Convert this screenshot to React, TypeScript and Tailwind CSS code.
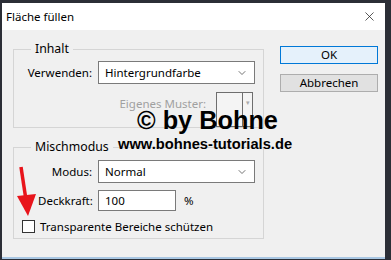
import { ChevronDown, X } from 'lucide-react';

const ui = "font-['Noto_Sans','Liberation_Sans',sans-serif] text-[11.5px] text-[#000]";

function Select({ value }: { value: string }) {
  return (
    <div className="flex items-center justify-between h-[23px] w-[157px] border border-[#7a7a7a] bg-white pl-[6px] pr-[6px]">
      <span>{value}</span>
      <ChevronDown className="w-[12px] h-[12px] text-[#444]" strokeWidth={1.5} />
    </div>
  );
}

function Legend({ label }: { label: string }) {
  return (
    <span className="-mt-[9px] ml-[17px] w-fit h-[16px] px-[4px] bg-[#f0f0f0] text-[12.3px] leading-[16px]">{label}</span>
  );
}

export default function App() {
  return (
    <div className={`w-[391px] h-[260px] bg-[#2b2e36] relative overflow-hidden ${ui}`}>
      {/* Window */}
      <div className="ml-[2px] mt-[3px] w-[383px] h-[256px] flex flex-col bg-[#f0f0f0] border-b-[2px] border-[#a9c7e3]">
        {/* Title bar */}
        <div className="h-[27px] bg-white flex items-center justify-between pl-[4px] pr-[8px]">
          <span className="text-[11.5px]">Fläche füllen</span>
          <X className="w-[15px] h-[15px] text-[#222]" strokeWidth={1.2} />
        </div>

        {/* Body */}
        <div className="flex flex-1">
          {/* Left column */}
          <div className="ml-[11px] pt-[19px] w-[251px] flex flex-col gap-[19px]">
            <div className="border border-[#d5d5d5] h-[79px] flex flex-col pr-[8px]">
              <Legend label="Inhalt" />
              <div className="flex items-center justify-end mt-[4px]">
                <span className="mr-[6px]">Verwenden:</span>
                <Select value="Hintergrundfarbe" />
              </div>
              <div className="flex items-start justify-end mt-[8px] mr-[2px]">
                <span className="mt-[3px] mr-[10px] text-[#a0a0a0]">Eigenes Muster:</span>
                <div className="flex w-[37px] h-[35px] border border-[#6e6e6e] bg-[#f4f4f4]">
                  <div className="flex-1 border-r border-[#6e6e6e]" />
                  <div className="w-[9px] flex justify-center pt-[6px] text-[7px] text-[#aaa] leading-none">▾</div>
                </div>
              </div>
            </div>

            <div className="border border-[#d5d5d5] h-[92px] flex flex-col pr-[8px]">
              <Legend label="Mischmodus" />
              <div className="flex items-center justify-end mt-[5px]">
                <span className="mr-[6px]">Modus:</span>
                <Select value="Normal" />
              </div>
              <div className="flex items-center mt-[7px] pl-[24px]">
                <span className="w-[60px]">Deckkraft:</span>
                <div className="h-[21px] w-[78px] border border-[#7a7a7a] bg-white pl-[6px] flex items-center">100</div>
                <span className="ml-[8px]">%</span>
              </div>
              <div className="flex items-center mt-[7px] pl-[8px]">
                <div className="w-[13px] h-[13px] border border-[#333] bg-white" />
                <span className="ml-[5px]">Transparente Bereiche schützen</span>
              </div>
            </div>
          </div>

          {/* Buttons */}
          <div className="ml-[16px] flex flex-col gap-[10px] pt-[16px]">
            <button className="w-[98px] h-[18px] border border-[#0078d7] bg-[#e5f1fb] flex items-center justify-center leading-none">OK</button>
            <button className="w-[98px] h-[18px] border border-[#adadad] bg-[#e1e1e1] flex items-center justify-center leading-none">Abbrechen</button>
          </div>
        </div>
      </div>

      {/* Watermark overlay */}
      <div className="absolute left-[137px] top-[106px] font-['Liberation_Sans',Arial,sans-serif] font-bold text-[25.3px] leading-[28px] text-black">© by Bohne</div>
      <div className="absolute left-[118px] top-[135px] font-['Liberation_Sans',Arial,sans-serif] font-bold text-[14.7px] leading-[18px] text-black">www.bohnes-tutorials.de</div>

      {/* Red arrow */}
      <svg className="absolute left-0 top-0" width="60" height="230" viewBox="0 0 60 230">
        <line x1="21" y1="167" x2="26" y2="200" stroke="#e8141b" strokeWidth="3.5" />
        <polygon points="17,196 36,194 28,216" fill="#e8141b" />
      </svg>
    </div>
  );
}
